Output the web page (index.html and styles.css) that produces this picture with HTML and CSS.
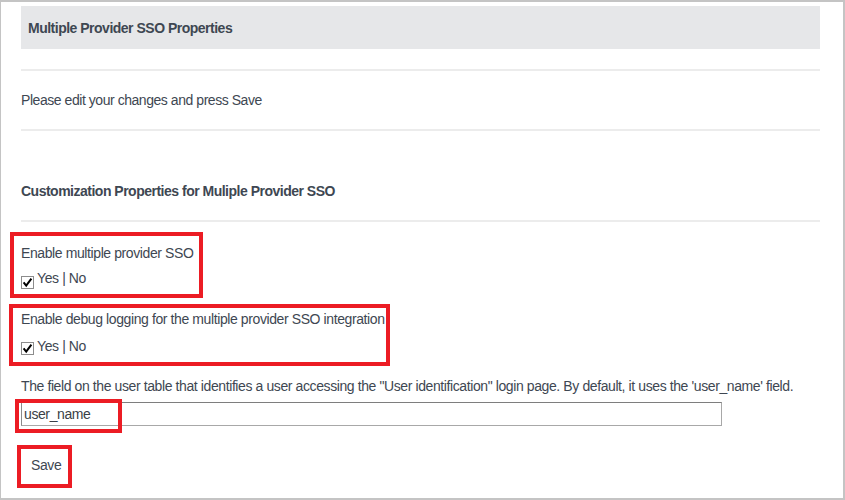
FILE: index.html
```html
<!DOCTYPE html>
<html>
<head>
<meta charset="utf-8">
<link rel="stylesheet" href="styles.css">
</head>
<body>
<div class="frame">
  <div class="header">Multiple Provider SSO Properties</div>
  <div class="rule rule-1"></div>
  <p class="intro">Please edit your changes and press Save</p>
  <div class="rule rule-2"></div>
  <h2 class="section-title">Customization Properties for Muliple Provider SSO</h2>
  <div class="rule rule-3"></div>

  <div class="field field-1">
    <div class="label">Enable multiple provider SSO</div>
    <div class="choice">
      <span class="check"><svg width="13" height="13" viewBox="0 0 13 13"><rect x="0.5" y="0.5" width="12" height="12" fill="#fff" stroke="#8c8c8c"/><path d="M2.6 6.4 L5.2 9.6 L10.4 2.6" fill="none" stroke="#000" stroke-width="2"/></svg></span>
      <span class="choice-text">Yes | No</span>
    </div>
  </div>

  <div class="field field-2">
    <div class="label">Enable debug logging for the multiple provider SSO integration</div>
    <div class="choice">
      <span class="check"><svg width="13" height="13" viewBox="0 0 13 13"><rect x="0.5" y="0.5" width="12" height="12" fill="#fff" stroke="#8c8c8c"/><path d="M2.6 6.4 L5.2 9.6 L10.4 2.6" fill="none" stroke="#000" stroke-width="2"/></svg></span>
      <span class="choice-text">Yes | No</span>
    </div>
  </div>

  <div class="field field-3">
    <div class="label">The field on the user table that identifies a user accessing the "User identification" login page. By default, it uses the 'user_name' field.</div>
    <div class="text-input">user_name</div>
  </div>

  <button class="save">Save</button>

  <span class="mark mark-1"></span>
  <span class="mark mark-2"></span>
  <span class="mark mark-3"></span>
  <span class="mark mark-4"></span>
</div>
</body>
</html>
```

FILE: styles.css
```css
html, body {
  margin: 0;
  padding: 0;
  background: #fff;
}

.frame {
  position: relative;
  box-sizing: border-box;
  width: 845px;
  height: 500px;
  border: 2px solid #c4c4c4;
  border-left-width: 1px;
  padding: 4px 23px 0 20px;
  font-family: "Liberation Sans", Arial, sans-serif;
  font-size: 14px;
  line-height: 18px;
  letter-spacing: -0.4px;
  color: #3e4752;
  overflow: hidden;
}

.header {
  height: 43px;
  display: flex;
  align-items: center;
  padding-left: 7px;
  background: #e6e7e9;
  font-weight: bold;
  letter-spacing: -0.5px;
}

.rule {
  height: 2px;
  background: #ececec;
  margin-top: 20px;
}

.intro {
  margin: 20px 0 0 0;
  letter-spacing: -0.45px;
}

.section-title {
  margin: 51px 0 0 0;
  font-size: 14px;
  line-height: 18px;
  font-weight: bold;
  letter-spacing: -0.5px;
}

.field-1 { margin-top: 22px; }
.field-2 { margin-top: 21px; }
.field-3 { margin-top: 22px; }

.choice {
  display: flex;
  align-items: flex-start;
  margin-top: 7px;
}

.field-2 .choice { margin-top: 9px; }

.check {
  display: block;
  width: 13px;
  height: 13px;
  margin-top: 7px;
  margin-right: 3px;
}

.field-2 .check { margin-top: 5px; }

.check svg { display: block; }

.text-input {
  box-sizing: border-box;
  width: 701px;
  height: 24px;
  margin-top: 7px;
  border: 1px solid #a8a8a8;
  border-top-color: #7e7e7e;
  border-left-color: #8a8a8a;
  padding: 2px 0 0 2px;
  color: #3a3f46;
  line-height: 18px;
}

.save {
  display: block;
  margin: 30px 0 0 10px;
  padding: 0;
  border: none;
  background: none;
  font: inherit;
  letter-spacing: -0.4px;
  color: #3e4752;
  line-height: 18px;
}

.mark {
  position: absolute;
  box-sizing: border-box;
  border: 4px solid #ec1c24;
}

.mark-1 { left: 9px;  top: 230px; width: 193px; height: 66px; }
.mark-2 { left: 8px;  top: 302px; width: 381px; height: 62px; }
.mark-3 { left: 14px; top: 397px; width: 107px; height: 34px; }
.mark-4 { left: 16px; top: 443px; width: 55px;  height: 43px; }
```
